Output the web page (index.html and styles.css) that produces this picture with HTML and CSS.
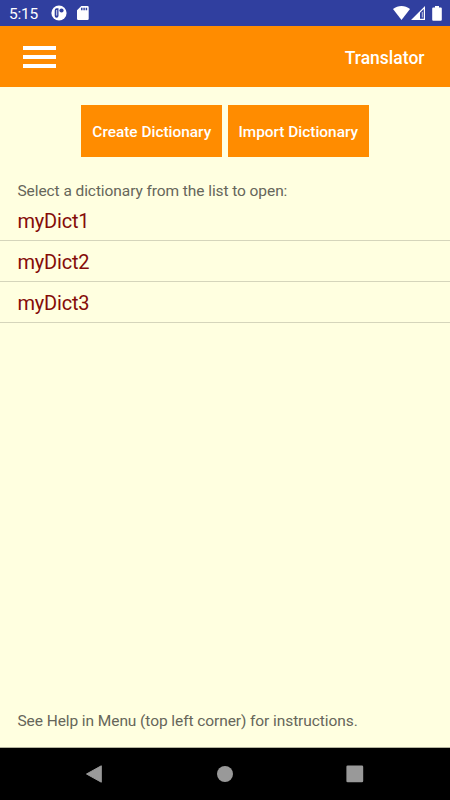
FILE: index.html
```html
<!DOCTYPE html>
<html lang="en">
<head>
    <meta charset="UTF-8">
    <meta name="viewport" content="width=device-width, initial-scale=1.0">
    <title>Translator</title>
    <link rel="stylesheet" href="styles.css">
</head>
<body>

<div class="status-bar">
    <span class="clock">5:15</span>
    <svg class="icon-app" width="16" height="16" viewBox="0 0 16 16">
        <circle cx="8" cy="8" r="7.6" fill="#fff"/>
        <path d="M7.500 3.200v7.600a2 2 0 0 1-2 2A2 2 0 0 1 3.700 10.800V5.200a2 2 0 0 1 2-2z" fill="#303f9f"/>
        <path d="M5.700 5v5.500" stroke="#fff" stroke-width=".8"/>
        <circle cx="10.500" cy="5.500" r="2.100" fill="#303f9f"/>
    </svg>
    <svg class="icon-card" width="12" height="14" viewBox="0 0 12 14">
        <path d="M4.300 0H10.500A1.200 1.200 0 0 1 11.700 1.200V12.800A1.200 1.200 0 0 1 10.500 14H1.200A1.200 1.200 0 0 1 0 12.800V4.300z" fill="#fff"/>
        <path d="M4.800 1.800v2.400M7.100 1.800v2.400M9.400 1.800v2.400" stroke="#303f9f" stroke-width="1.500"/>
    </svg>
    <span class="spacer"></span>
    <svg class="icon-wifi" width="17" height="14" viewBox="0 0 17 14">
        <path d="M0 3C5-1 12-1 17 3L8.500 14z" fill="#fff"/>
    </svg>
    <svg class="icon-signal" width="14" height="14" viewBox="0 0 14 14">
        <path fill-rule="evenodd" d="M14 0V14H0zM12.800 3L9 6.800V12.700H12.800z" fill="#fff"/>
        <path d="M11.300 6V11.500" stroke="#fff" stroke-width=".7"/>
    </svg>
    <svg class="icon-battery" width="10" height="15" viewBox="0 0 10 15">
        <path d="M3 0H7V1.500H8.800A1 1 0 0 1 9.800 2.500V13.800A1 1 0 0 1 8.800 14.800H1.200A1 1 0 0 1 .2 13.800V2.500A1 1 0 0 1 1.200 1.500H3z" fill="#fff"/>
    </svg>
</div>

<header>
    <button class="menu-btn" aria-label="Menu">
        <span></span>
        <span></span>
        <span></span>
    </button>
    <h1>Translator</h1>
</header>

<main>
    <div class="buttons">
        <button class="btn">Create Dictionary</button>
        <button class="btn">Import Dictionary</button>
    </div>

    <p class="hint">Select a dictionary from the list to open:</p>
    <ul id="dictList">
        <li>myDict1</li>
        <li>myDict2</li>
        <li>myDict3</li>
    </ul>

    <p class="help">See Help in Menu (top left corner) for instructions.</p>
</main>

<nav class="nav-bar">
    <svg width="18" height="18" viewBox="0 0 18 18">
        <path d="M15.300 .8V17.200L.5 9z" fill="#999" stroke="#999" stroke-linejoin="round"/>
    </svg>
    <svg width="18" height="18" viewBox="0 0 18 18">
        <circle cx="9" cy="9" r="8" fill="#999"/>
    </svg>
    <svg width="18" height="18" viewBox="0 0 18 18">
        <rect x=".4" y=".5" width="16.800" height="16.800" rx="1.300" fill="#999"/>
    </svg>
</nav>

</body>
</html>
```
FILE: styles.css
```css
body {
    font-family: Roboto, "Liberation Sans", sans-serif;
    margin: 0;
    height: 100vh;
    display: flex;
    flex-direction: column;
    background-color: #ffffe0;
}

.status-bar {
    height: 26px;
    box-sizing: border-box;
    background-color: #303f9f;
    color: white;
    display: flex;
    align-items: center;
    padding: 0 8px 0 9px;
}

.clock {
    width: 41.5px;
    font-size: 15.5px;
    letter-spacing: -0.2px;
    line-height: 18px;
    padding-top: 2px;
}

.icon-card {
    margin-left: 10px;
    margin-right: 1px;
}

.spacer {
    flex: 1;
}

.icon-signal {
    margin-left: 1px;
}

.icon-battery {
    margin-left: 7px;
}

header {
    height: 61px;
    background-color: #ff8c00;
    color: white;
    display: flex;
    align-items: center;
    justify-content: space-between;
    padding: 0 25.5px 0 23px;
}

h1 {
    font-size: 17.5px;
    font-weight: 500;
    margin: 2px 0 0;
}

.menu-btn {
    background: none;
    border: none;
    padding: 0;
    width: 33px;
    display: flex;
    flex-direction: column;
    gap: 5px;
}

.menu-btn span {
    height: 4px;
    background-color: white;
}

main {
    flex: 1;
    display: flex;
    flex-direction: column;
    border-bottom: 1px solid #b4b49e;
}

.buttons {
    display: flex;
    justify-content: center;
    gap: 5.5px;
    margin-top: 18px;
}

.btn {
    background-color: #ff8c00;
    color: white;
    border: none;
    width: 141px;
    height: 52px;
    padding: 2px 0 0;
    font-family: inherit;
    font-size: 15.4px;
    font-weight: 500;
    white-space: nowrap;
}

p {
    margin: 0;
    padding: 0 17.5px;
    font-size: 15.5px;
    letter-spacing: -0.08px;
    line-height: 20px;
    color: #66665a;
}

.hint {
    margin-top: 24px;
}

ul {
    list-style: none;
    margin: 0;
    padding: 0;
}

li {
    height: 40px;
    line-height: 42px;
    padding-left: 17.5px;
    font-size: 20px;
    letter-spacing: -0.2px;
    color: #850c08;
    border-bottom: 1px solid #d5d5bb;
}

#dictList {
    margin-top: -1px;
}

.help {
    margin-top: auto;
    margin-bottom: 16px;
}

.nav-bar {
    height: 52px;
    background-color: black;
    display: flex;
    align-items: center;
    justify-content: center;
    gap: 112px;
}
```
